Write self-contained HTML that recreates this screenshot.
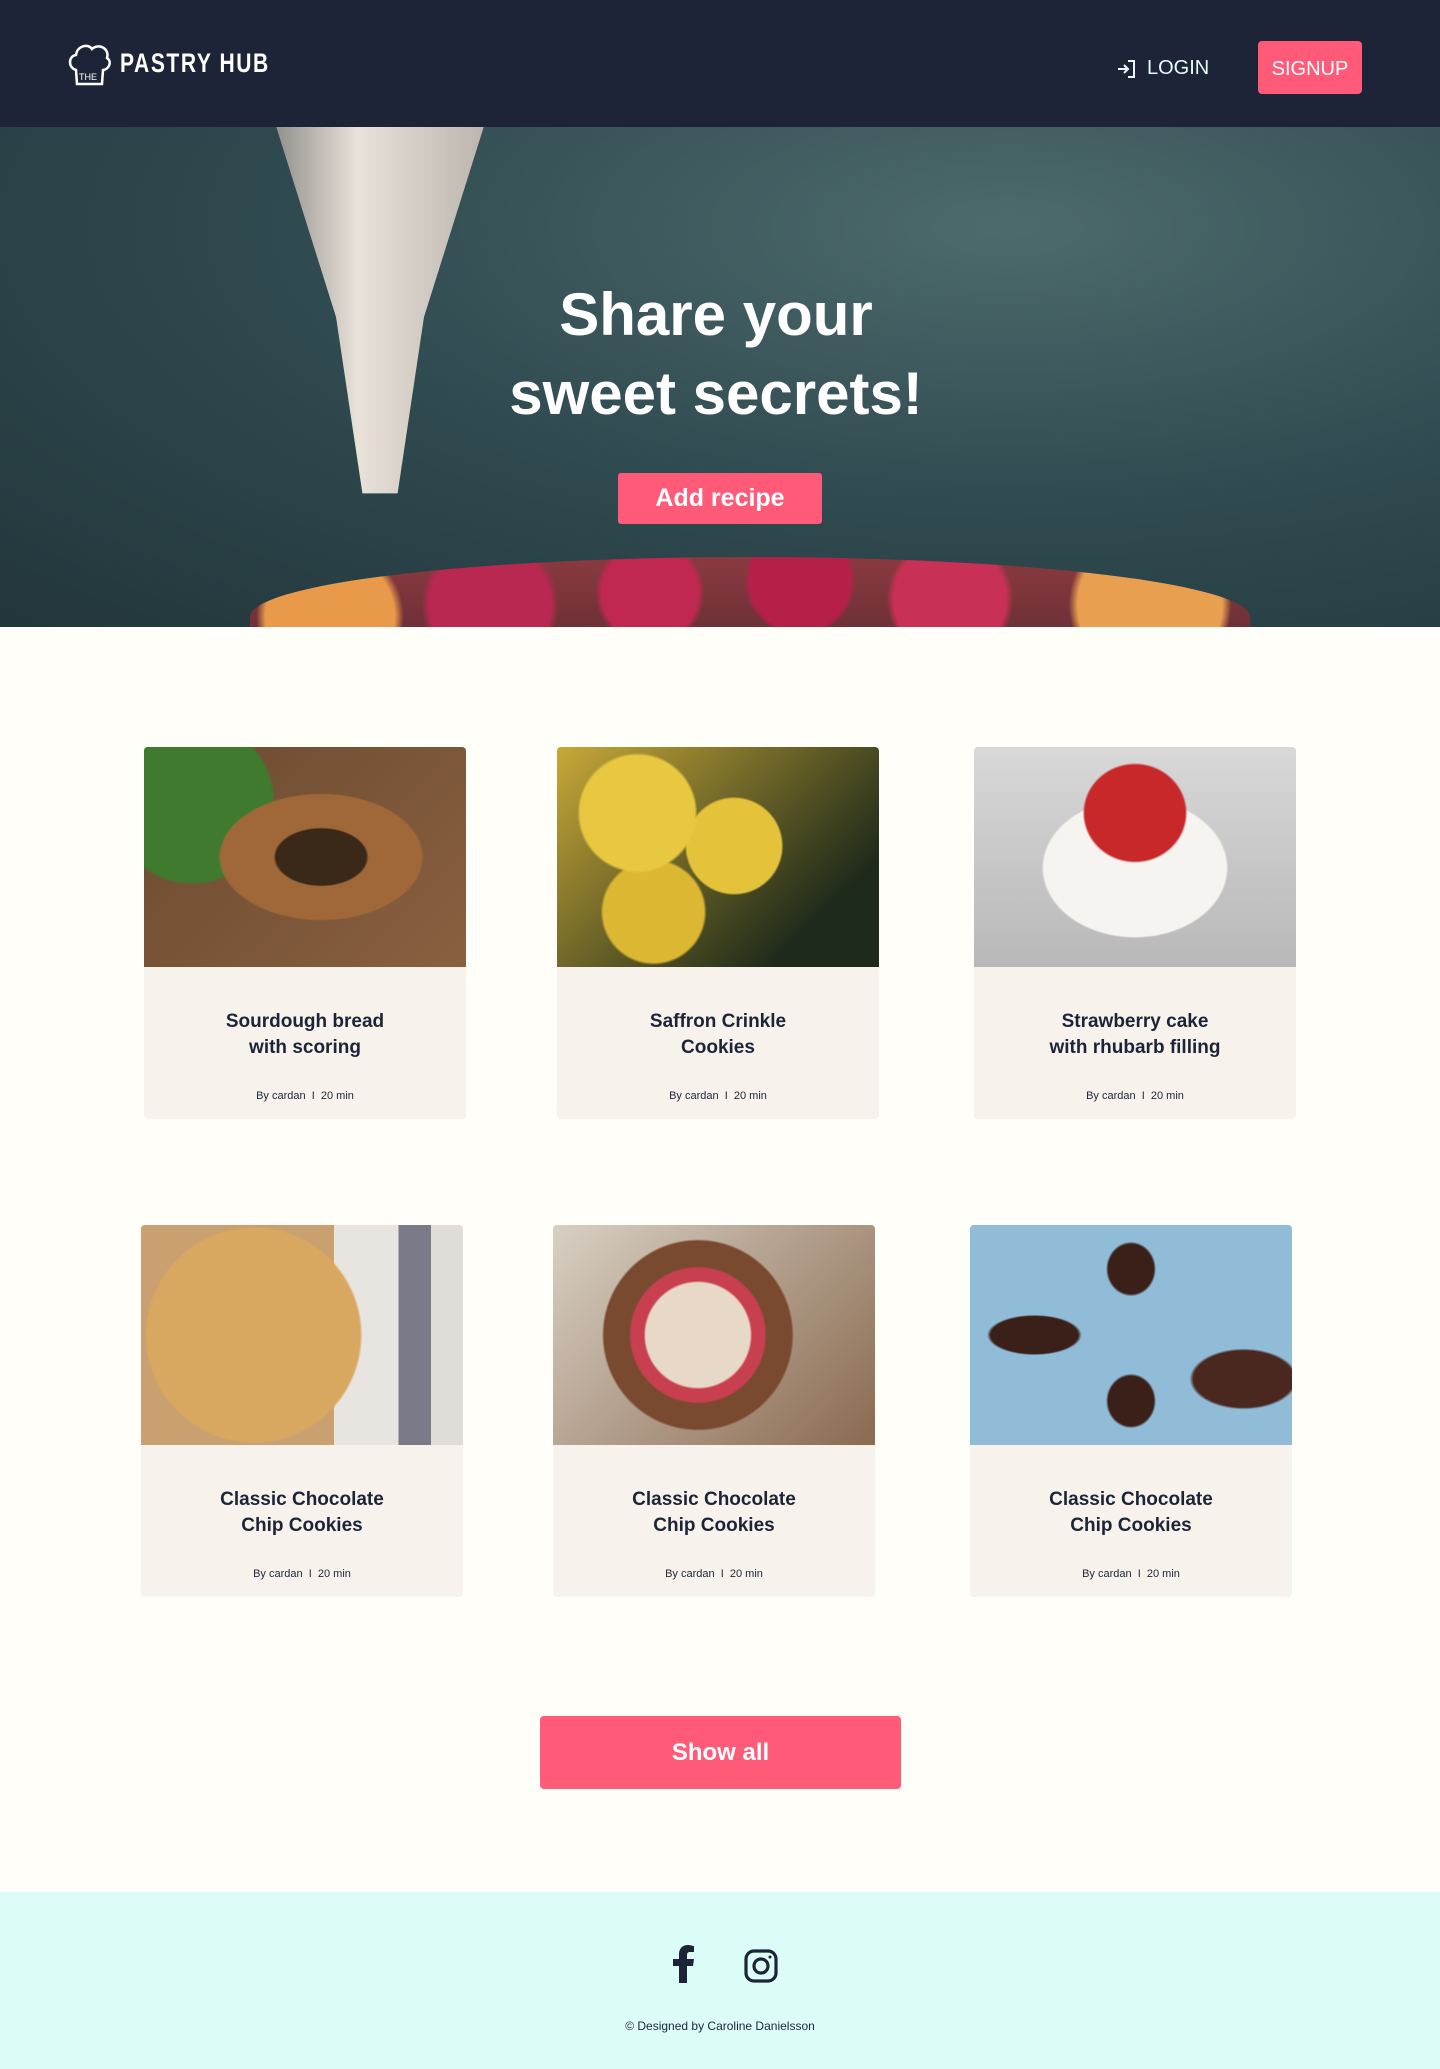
<!DOCTYPE html>
<html><head><meta charset="utf-8"><style>
*{margin:0;padding:0;box-sizing:border-box}
body{width:1440px;height:2069px;background:#fffef9;font-family:"Liberation Sans",sans-serif;color:#1d2438;position:relative;overflow:hidden}
.hdr{position:absolute;left:0;top:0;width:1440px;height:127px;background:#1d2438}
.logo{position:absolute;left:66px;top:40px;display:flex;align-items:center;color:#fff}
.logo span{font-size:27px;letter-spacing:2px;margin-left:6px;transform:scaleX(.78);transform-origin:left;font-weight:bold}
.login{position:absolute;left:1117px;top:57px;color:#e8fbff;font-size:20px;display:flex;align-items:center;gap:12px}
.signup{position:absolute;left:1258px;top:41px;width:104px;height:53px;background:#ff5a78;border-radius:4px;color:#fff;font-size:20px;display:flex;align-items:center;justify-content:center;padding-top:3px}
.hero{position:absolute;left:0;top:127px;width:1440px;height:500px;overflow:hidden;background:radial-gradient(ellipse at 70% 20%,#4d6a6c,#2f4a50 50%,#22363b)}
.hero h1{position:absolute;left:0;width:1432px;top:148px;text-align:center;color:#fff;font-size:60px;line-height:79px;font-weight:bold}
.add{position:absolute;left:618px;top:346px;width:204px;height:51px;background:#ff5a78;border-radius:3px;color:#fff;font-size:25px;font-weight:bold;display:flex;align-items:center;justify-content:center}
.card{position:absolute;width:322px;height:372px;background:#f7f3ec;border-radius:4px;overflow:hidden}
.card .im{height:220px}
.card h3{margin-top:42px;text-align:center;font-size:19px;line-height:26px;font-weight:bold}
.card p{text-align:center;font-size:11px;margin-top:29px}
.btn{position:absolute;left:540px;top:1716px;width:361px;height:73px;background:#ff5a78;border-radius:4px;color:#fff;font-size:24px;font-weight:bold;display:flex;align-items:center;justify-content:center}
.ftr{position:absolute;left:0;top:1892px;width:1440px;height:177px;background:#dcfdf7}
.ftr p{position:absolute;top:127px;width:100%;text-align:center;font-size:12px}
</style></head><body>
<div class="hdr">
<div class="logo"><svg width="48" height="46" viewBox="0 0 48 46" fill="none" stroke="#fff" stroke-width="2.5"><path d="M10 30C2 28 2 16 10 15C11 6 22 3 26 9C32 3 44 8 41 18C47 22 42 30 37 30L36 44H11Z"/><text x="13" y="40" fill="#fff" stroke="none" font-size="9" font-family="Liberation Sans">THE</text></svg><span>PASTRY HUB</span></div>
<div class="login"><svg width="18" height="18" viewBox="0 0 18 18" fill="none" stroke="#e8fbff" stroke-width="2"><path d="M1 9h10M7 5l4 4-4 4M11 1h6v16h-6"/></svg>LOGIN</div>
<div class="signup">SIGNUP</div>
</div>
<div class="hero">
<div style="position:absolute;left:270px;top:-20px;width:220px;height:420px;background:linear-gradient(90deg,#8d8a85,#e8e2da 40%,#b9b3ab);clip-path:polygon(0 0,100% 0,70% 50%,58% 92%,42% 92%,30% 50%)"></div>
<div style="position:absolute;left:250px;top:430px;width:1000px;height:120px;border-radius:50% 50% 0 0;background:radial-gradient(circle at 8% 50%,#e89a4a 0 7%,transparent 8%),radial-gradient(circle at 24% 40%,#b82850 0 8%,transparent 9%),radial-gradient(circle at 40% 30%,#c02850 0 8%,transparent 9%),radial-gradient(circle at 55% 20%,#b52048 0 9%,transparent 10%),radial-gradient(circle at 70% 35%,#c83055 0 8%,transparent 9%),radial-gradient(circle at 90% 40%,#e8a050 0 8%,transparent 9%),linear-gradient(#8a3a40,#5a2a30)"></div>
<h1>Share your<br>sweet secrets!</h1>
<div class="add">Add recipe</div>
</div>
<div class="card" style="left:144px;top:747px"><div class="im" style="background:radial-gradient(ellipse at 55% 50%,#3a2818 0 18%,#a06838 19% 40%,transparent 41%),radial-gradient(circle at 15% 25%,#3f7a2e 0 25%,transparent 26%),linear-gradient(135deg,#6b4a30,#8a6040)"></div><h3>Sourdough bread<br>with scoring</h3><p>By cardan &nbsp;I&nbsp; 20 min</p></div>
<div class="card" style="left:557px;top:747px"><div class="im" style="background:radial-gradient(circle at 25% 30%,#e8c840 0 20%,transparent 21%),radial-gradient(circle at 55% 45%,#e4c23a 0 22%,transparent 23%),radial-gradient(circle at 30% 75%,#dcb832 0 18%,transparent 19%),linear-gradient(135deg,#c8a838,#1e2a1a 80%)"></div><h3>Saffron Crinkle<br>Cookies</h3><p>By cardan &nbsp;I&nbsp; 20 min</p></div>
<div class="card" style="left:974px;top:747px"><div class="im" style="background:radial-gradient(ellipse at 50% 30%,#c8282a 0 22%,transparent 23%),radial-gradient(ellipse at 50% 55%,#f6f4f0 0 40%,transparent 41%),linear-gradient(#d8d8d8,#b8b8b8)"></div><h3>Strawberry cake<br>with rhubarb filling</h3><p>By cardan &nbsp;I&nbsp; 20 min</p></div>
<div class="card" style="left:141px;top:1225px"><div class="im" style="background:radial-gradient(circle at 35% 50%,#d8a860 0 45%,transparent 46%),linear-gradient(90deg,#caa070 0 60%,#e8e4e0 60% 80%,#7a7a88 80% 90%,#e0dcd8 90%)"></div><h3>Classic Chocolate<br>Chip Cookies</h3><p>By cardan &nbsp;I&nbsp; 20 min</p></div>
<div class="card" style="left:553px;top:1225px"><div class="im" style="background:radial-gradient(circle at 45% 50%,#e8d8c8 0 25%,#c84050 26% 32%,#7a4a30 33% 45%,transparent 46%),linear-gradient(135deg,#d8d0c4,#8a6a50)"></div><h3>Classic Chocolate<br>Chip Cookies</h3><p>By cardan &nbsp;I&nbsp; 20 min</p></div>
<div class="card" style="left:970px;top:1225px"><div class="im" style="background:radial-gradient(ellipse at 20% 50%,#3a2018 0 12%,transparent 13%),radial-gradient(ellipse at 50% 20%,#3a2018 0 10%,transparent 11%),radial-gradient(ellipse at 85% 70%,#4a2820 0 13%,transparent 14%),radial-gradient(ellipse at 50% 80%,#3a2018 0 10%,transparent 11%),#90bcd8"></div><h3>Classic Chocolate<br>Chip Cookies</h3><p>By cardan &nbsp;I&nbsp; 20 min</p></div>
<div class="btn">Show all</div>
<div class="ftr">
<svg style="position:absolute;left:673px;top:53px" width="22" height="38" viewBox="0 0 22 38"><path fill="#1d2438" d="M14 38V21h6l1-7h-7V10c0-2 1-3 3-3h4V1C20 1 17 0 15 0 9 0 6 4 6 9v5H0v7h6v17z"/></svg>
<svg style="position:absolute;left:744px;top:57px" width="34" height="34" viewBox="0 0 34 34" fill="none" stroke="#1d2438" stroke-width="3.2"><rect x="2" y="2" width="30" height="30" rx="8"/><circle cx="17" cy="17" r="7"/><circle cx="26" cy="8" r="1.5" fill="#1d2438" stroke="none"/></svg>
<p>© Designed by Caroline Danielsson</p>
</div>
</body></html>
